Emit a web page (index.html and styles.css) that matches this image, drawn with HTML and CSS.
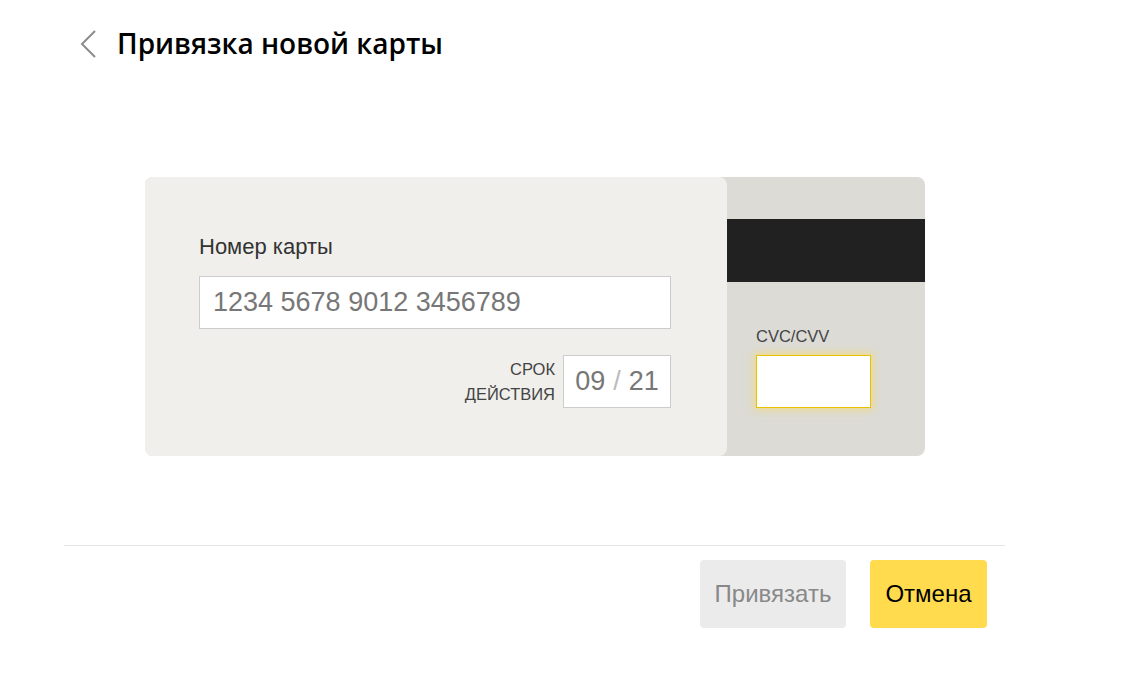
FILE: index.html
```html
<!DOCTYPE html>
<html lang="ru">
<head>
<meta charset="utf-8">
<title>Привязка новой карты</title>
<link rel="stylesheet" href="styles.css">
</head>
<body>
<header class="head">
  <a class="back" href="#" aria-label="Назад">
    <svg width="16" height="28" viewBox="0 0 16 28"><path d="M15 1 L2 14 L15 27" fill="none" stroke="#8c8c8c" stroke-width="2"/></svg>
  </a>
  <h1 class="title">Привязка новой карты</h1>
</header>
<main class="card">
  <section class="front">
    <label class="num-label">Номер карты</label>
    <div class="num-input">1234 5678 9012 3456789</div>
    <div class="exp-row">
      <div class="exp-label">СРОК<br>ДЕЙСТВИЯ</div>
      <div class="exp-input"><span>09</span><span class="slash">/</span><span>21</span></div>
    </div>
  </section>
  <section class="rear">
    <div class="stripe"></div>
    <div class="cvc-label">CVC/CVV</div>
    <div class="cvc-input"></div>
  </section>
</main>
<footer class="foot">
  <div class="actions">
    <button class="btn btn-grey">Привязать</button>
    <button class="btn btn-yellow">Отмена</button>
  </div>
</footer>
</body>
</html>
```
FILE: styles.css
```css
* { box-sizing: border-box; }
body {
  margin: 0;
  background: #fff;
  font-family: "Liberation Sans", Arial, sans-serif;
  color: #333;
}
.head {
  display: flex;
  align-items: center;
  padding: 27px 0 0 80px;
  height: 58px;
}
.back { display: flex; width: 37px; margin-top: 2px; }
.title {
  margin: 0;
  font-family: "Open Sans", sans-serif;
  font-weight: 600;
  font-size: 28px;
  line-height: 30px;
  color: #000;
}
.card {
  margin: 119px 0 0 145px;
  width: 780px;
  height: 279px;
  display: flex;
  background: #dcdbd6;
  border-radius: 8px;
}
.front {
  width: 582px;
  background: #f0efeb;
  border-radius: 8px;
  padding: 57px 56px 0 54px;
  display: flex;
  flex-direction: column;
}
.num-label {
  font-size: 22px;
  line-height: 25px;
  color: #333;
}
.num-input {
  margin-top: 17px;
  height: 53px;
  background: #fff;
  border: 1px solid #ccc;
  font-size: 27px;
  line-height: 51px;
  padding-left: 13px;
  color: #777;
}
.exp-row {
  margin-top: 26px;
  display: flex;
  justify-content: flex-end;
  align-items: center;
  gap: 8px;
}
.exp-label {
  text-align: right;
  font-size: 16.5px;
  line-height: 25px;
  color: #444;
}
.exp-input {
  width: 108px;
  height: 53px;
  background: #fff;
  border: 1px solid #ccc;
  display: flex;
  align-items: center;
  justify-content: center;
  gap: 8px;
  font-size: 27px;
  color: #777;
}
.exp-input .slash { color: #bbb; }
.rear {
  flex: 1;
  padding-top: 42px;
  display: flex;
  flex-direction: column;
}
.stripe {
  height: 63px;
  background: #212121;
}
.cvc-label {
  margin: 45px 0 0 29px;
  font-size: 16.5px;
  line-height: 18px;
  color: #444;
}
.cvc-input {
  margin: 10px 0 0 29px;
  width: 115px;
  height: 53px;
  background: #fff;
  border: 1px solid #e8c100;
  box-shadow: 0 0 8px 2px rgba(255, 219, 77, 0.55);
}
.foot {
  margin: 89px 0 0 64px;
  width: 941px;
  border-top: 1px solid #e5e5e5;
  padding: 14px 18px 0 0;
}
.actions {
  display: flex;
  justify-content: flex-end;
  gap: 24px;
}
.btn {
  height: 68px;
  border: 0;
  border-radius: 4px;
  font-family: "Liberation Sans", Arial, sans-serif;
  font-size: 24px;
  padding: 0;
}
.btn-grey { background: #ebebeb; color: #888; width: 146px; }
.btn-yellow { background: #ffdb4d; color: #000; width: 117px; }
```
